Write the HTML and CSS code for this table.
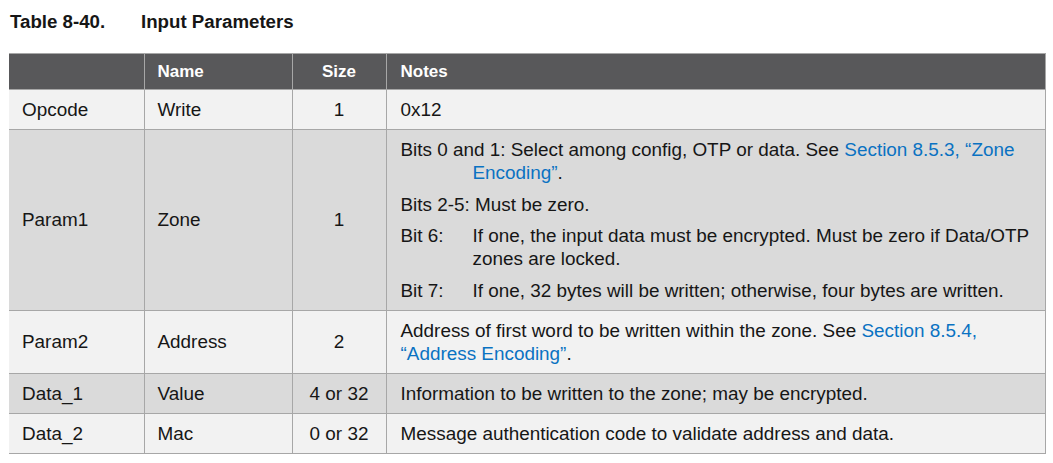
FILE: index.html
```html
<!DOCTYPE html>
<html>
<head>
<meta charset="utf-8">
<link rel="stylesheet" href="styles.css">
</head>
<body>
<div class="page">
  <div class="caption"><span class="cap-num">Table 8-40.</span><span class="cap-title">Input Parameters</span></div>
  <table class="params">
    <colgroup>
      <col class="c1"><col class="c2"><col class="c3"><col class="c4">
    </colgroup>
    <thead>
      <tr><th></th><th>Name</th><th class="center">Size</th><th>Notes</th></tr>
    </thead>
    <tbody>
      <tr class="light"><td>Opcode</td><td>Write</td><td class="center">1</td><td>0x12</td></tr>
      <tr class="dark">
        <td>Param1</td><td>Zone</td><td class="center">1</td>
        <td class="notes">
          <p class="hang">Bits 0 and 1: Select among config, OTP or data. See <span class="link">Section 8.5.3, “Zone Encoding”</span>.</p>
          <p>Bits 2-5: Must be zero.</p>
          <p class="hang"><span class="lbl">Bit 6:</span>If one, the input data must be encrypted. Must be zero if Data/OTP zones are locked.</p>
          <p class="hang"><span class="lbl">Bit 7:</span>If one, 32 bytes will be written; otherwise, four bytes are written.</p>
        </td>
      </tr>
      <tr class="light"><td>Param2</td><td>Address</td><td class="center">2</td><td>Address of first word to be written within the zone. See <span class="link">Section 8.5.4, “Address Encoding”</span>.</td></tr>
      <tr class="dark"><td>Data_1</td><td>Value</td><td class="center">4 or 32</td><td>Information to be written to the zone; may be encrypted.</td></tr>
      <tr class="light"><td>Data_2</td><td>Mac</td><td class="center">0 or 32</td><td>Message authentication code to validate address and data.</td></tr>
    </tbody>
  </table>
</div>
</body>
</html>
```
FILE: styles.css
```css
html, body {
  margin: 0;
  padding: 0;
  background: #ffffff;
}
.page {
  padding: 10px 0 0 9px;
  font-family: "Liberation Sans", Arial, sans-serif;
  color: #161616;
}
.caption {
  display: flex;
  font-weight: bold;
  font-size: 18.7px;
  line-height: 24px;
  margin-left: 1px;
  margin-bottom: 19px;
}
.cap-num {
  width: 131px;
}
.params {
  border-collapse: collapse;
  table-layout: fixed;
  width: 1036px;
  font-size: 18.9px;
  line-height: 23px;
}
.c1 { width: 135px; }
.c2 { width: 148px; }
.c3 { width: 94px; }
.c4 { width: 659px; }
.params th {
  background: #58585a;
  color: #ffffff;
  font-size: 17px;
  font-weight: bold;
  text-align: left;
  height: 34px;
  padding: 1px 13px 0;
  border: 1px solid #a7a7a7;
  border-left: none;
  line-height: 20px;
}
.params th + th { border-left: 1px solid #a7a7a7; }
.params td {
  padding: 8px 13px;
  vertical-align: middle;
  border-top: 1px solid #a7a7a7;
  border-bottom: 1px solid #a7a7a7;
  border-right: 1px solid #a7a7a7;
}
.params td:last-child, .params th:last-child { padding-left: 14px; }
.params .center { text-align: center; }
.light td { background: #f2f2f2; }
.dark td { background: #dadada; }
.notes p {
  margin: 0;
}
.notes p + p { margin-top: 8.5px; }
.hang {
  padding-left: 72px;
  text-indent: -72px;
}
.lbl {
  display: inline-block;
  width: 72px;
  text-indent: 0;
}
.link { color: #0a72c2; }
```
